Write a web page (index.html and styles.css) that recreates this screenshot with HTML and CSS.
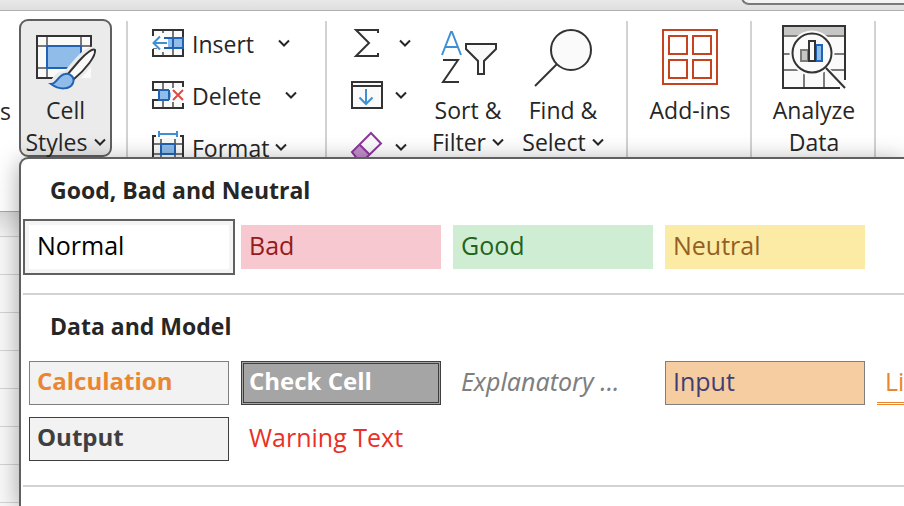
FILE: index.html
```html
<!DOCTYPE html>
<html lang="en">
<head>
<meta charset="utf-8">
<title>Cell Styles</title>
<link rel="stylesheet" href="styles.css">
</head>
<body>
<svg class="defs" width="0" height="0" aria-hidden="true">
  <symbol id="chevron" viewBox="0 0 12 8"><path d="M1 1.500 6 6.500 11 1.500" fill="none" stroke="#262626" stroke-width="2"/></symbol>
</svg>
<header class="titlebar"><input class="search" type="search" aria-label="Search"></header>
<main class="window">
  <div class="ribbon" role="toolbar" aria-label="Home">
    <div class="group group-styles">
      <span class="cut-label">s</span>
      <button class="big active" aria-expanded="true">
        <svg width="64" height="60" viewBox="1 0 64 60" fill="none">
          <path d="M4 2H58V44H4Z" fill="#fafafa"/>
          <path d="M14 2V44M48 2V12M4 12H58M4 34H14" stroke="#7a7a7a" stroke-width="2"/>
          <path d="M58 13V2H4V44H40" stroke="#333" stroke-width="2"/>
          <path d="M14 12H48V34H14Z" fill="#8fbce8" stroke="#2062b4" stroke-width="2"/>
          <path d="M62 16C59 14 52 18 45 26L33 40C22 39 24 48 16 51C24 58 38 56 42 46C54 34 63 23 62 16Z" fill="#ebebeb" stroke="#ebebeb" stroke-width="6"/>
          <path d="M62 16C60 14 53 19 46 27L34 41L41 45C53 35 63 22 62 16Z" fill="#fafafa" stroke="#333" stroke-width="2"/>
          <path d="M18 50C24 50 25 41 32 40C38 39 42 44 40 49C37 56 26 56 18 50Z" fill="#8fbce8" stroke="#2062b4" stroke-width="2"/>
        </svg>
        <span>Cell</span><span class="line">Styles <svg class="chev"><use href="#chevron"/></svg></span>
      </button>
    </div>
    <div class="group group-cells">
      <button class="small wide">
        <svg width="32" height="30" viewBox="0 0 32 30" fill="none">
          <path d="M1 2H31V28H1Z" fill="#fafafa"/>
          <path d="M11 2V28M21 2V28M1 10H31M1 20H31" stroke="#777" stroke-width="2"/>
          <path d="M1 8V2H31V28H1V21" stroke="#333" stroke-width="2"/>
          <path d="M12 10H31V20H12Z" fill="#8fbce8"/><path d="M11 10H31V20H11M21 10V20" stroke="#2062b4" stroke-width="2"/>
          <path d="M0 9H5V5H12V11H16V19H12V24H5V20H0Z" fill="#fff"/>
          <path d="M15 15H1M8 8.500 1.500 15 8 21.500" stroke="#3f8fd2" stroke-width="2"/>
        </svg><span>Insert</span><svg class="chev"><use href="#chevron"/></svg>
      </button>
      <button class="small wide">
        <svg width="32" height="30" viewBox="0 0 32 30" fill="none">
          <path d="M1 2H31V28H1V20H7V10H1Z" fill="#fafafa"/>
          <path d="M11 2V10M21 2V8M11 20V28M21 22V28" stroke="#777" stroke-width="2"/>
          <path d="M31 7V2H1V10H7M7 20H1V28H31V23" stroke="#333" stroke-width="2"/>
          <path d="M7 10H16L19 13V17L16 20H7Z" fill="#8fbce8"/>
          <path d="M17 10H7V20H17M17 10V20" stroke="#2062b4" stroke-width="2"/>
          <path d="M21 8.500 32 20.500M32 8.500 21 20.500" stroke="#fff" stroke-width="5"/>
          <path d="M21 10 31 20M31 10 21 20" stroke="#df4b43" stroke-width="2"/>
        </svg><span>Delete</span><svg class="chev"><use href="#chevron"/></svg>
      </button>
      <button class="small">
        <svg width="32" height="34" viewBox="0 0 32 34" fill="none">
          <path d="M1 6H31V32H1Z" fill="#fafafa"/>
          <path d="M9 9V32M23 9V32M1 14H31M1 24H31" stroke="#777" stroke-width="2"/>
          <path d="M4 6H1V32H31V6H28" stroke="#333" stroke-width="2"/>
          <path d="M9 14H23V24H9Z" fill="#8fbce8" stroke="#2062b4" stroke-width="2"/>
          <path d="M5 0H27V8H5Z" fill="#fff"/>
          <path d="M7 4H25M7 1V7M25 1V7" stroke="#3f8fd2" stroke-width="2"/>
        </svg><span>Format</span><svg class="chev"><use href="#chevron"/></svg>
      </button>
    </div>
    <div class="group group-editing">
      <div class="stack">
        <button class="small sum" aria-label="AutoSum">
          <svg width="32" height="30" viewBox="0 0 32 30" fill="none"><path d="M27 5V2H5L18 15 5 28H27V25" stroke="#333" stroke-width="2"/></svg><svg class="chev"><use href="#chevron"/></svg>
        </button>
        <button class="small" aria-label="Fill">
          <svg width="32" height="30" viewBox="0 0 32 30" fill="none"><path d="M1 2H31V28H1ZM1 6H31" fill="#fafafa" stroke="#333" stroke-width="2"/><path d="M15 9V24M8.500 17.500 15 24 21.500 17.500" stroke="#3f8fd2" stroke-width="2"/></svg><svg class="chev"><use href="#chevron"/></svg>
        </button>
        <button class="small" aria-label="Clear">
          <svg width="32" height="34" viewBox="0 0 32 34" fill="none"><path d="M20 3 30 13.500 12 31H8L1 24V21Z" fill="#fafafa"/><path d="M9 14 19 25 12 31H8L1 23Z" fill="#c490cf"/><path d="M20 3 30 13.500 12 31H8L1 22ZM8 14 19 25" stroke="#8c379b" stroke-width="2"/></svg><svg class="chev"><use href="#chevron"/></svg>
        </button>
      </div>
      <button class="big sort">
        <svg width="64" height="60" viewBox="0 0 64 60" fill="none">
          <path d="M6 21 15 -2H16L25 21M9 13H22" stroke="#3f8fd2" stroke-width="2"/>
          <path d="M7 26H22L7 48H23" stroke="#333" stroke-width="2"/>
          <path d="M30 10H60V15L48 27V40H42V27L30 15Z" fill="#fafafa" stroke="#333" stroke-width="2"/>
        </svg>
        <span>Sort &amp;</span><span class="line">Filter <svg class="chev"><use href="#chevron"/></svg></span>
      </button>
      <button class="big find">
        <svg width="64" height="60" viewBox="0 0 64 60" fill="none"><circle cx="40" cy="16" r="20" fill="#fafafa" stroke="#333" stroke-width="2"/><path d="M26 30 4 52" stroke="#333" stroke-width="2"/></svg>
        <span>Find &amp;</span><span class="line">Select <svg class="chev"><use href="#chevron"/></svg></span>
      </button>
    </div>
    <div class="group group-wide">
      <button class="big">
        <svg width="64" height="60" viewBox="0 0 64 60" fill="none" stroke="#c5441f" stroke-width="2"><path d="M5-4H59V50H5Z" fill="#fff"/><path d="M11 2H29V20H11ZM35 2H53V20H35ZM11 26H29V44H11ZM35 26H53V44H35Z"/></svg>
        <span>Add-ins</span>
      </button>
    </div>
    <div class="group group-wide">
      <button class="big">
        <svg width="64" height="60" viewBox="0 0 64 60" fill="none">
          <path d="M1-8H63V54H1Z" fill="#fafafa"/><path d="M1-8H63V1H1Z" fill="#c6c6c4"/>
          <path d="M1 2H63M1 20H63M1 36H63M22 36V54M42 36V54" stroke="#7d7b78" stroke-width="2"/>
          <path d="M63 46V-8H1V54H58" stroke="#333" stroke-width="2"/>
          <path d="M44 35 61 52" stroke="#fafafa" stroke-width="6"/>
          <circle cx="30" cy="19" r="21" fill="#fafafa" stroke="#fafafa" stroke-width="3"/>
          <circle cx="30" cy="19" r="19.500" stroke="#333" stroke-width="2"/>
          <path d="M44 34 63 54" stroke="#333" stroke-width="2"/>
          <path d="M19 16H26V27H19Z" fill="#c6c6c4" stroke="#7d7b78" stroke-width="2"/>
          <path d="M34 11H40V27H34Z" fill="#8fbce8" stroke="#2062b4" stroke-width="2"/>
          <path d="M27 7H33V27H27Z" fill="#fafafa" stroke="#333" stroke-width="2"/>
        </svg>
        <span>Analyze</span><span>Data</span>
      </button>
    </div>
  </div>
  <div class="sheet"></div>
  <div class="menu" role="menu" aria-label="Cell Styles">
    <section class="section">
      <h2>Good, Bad and Neutral</h2>
      <div class="swatches">
        <button class="swatch normal">Normal</button>
        <button class="swatch bad">Bad</button>
        <button class="swatch good">Good</button>
        <button class="swatch neutral">Neutral</button>
      </div>
    </section>
    <section class="section">
      <h2>Data and Model</h2>
      <div class="swatches">
        <button class="swatch calculation">Calculation</button>
        <button class="swatch check">Check Cell</button>
        <button class="swatch explanatory">Explanatory ...</button>
        <button class="swatch input">Input</button>
        <button class="swatch linked">Linked Cell</button>
        <button class="swatch output">Output</button>
        <button class="swatch warning">Warning Text</button>
      </div>
    </section>
  </div>
</main>
</body>
</html>
```
FILE: styles.css
```css
* { box-sizing: border-box; }
body {
  margin: 0;
  height: 100vh;
  display: flex;
  flex-direction: column;
  overflow: hidden;
  font: 23px/32px "Open Sans", "Noto Sans", sans-serif;
  color: #262626;
  background: #fff;
}
button { font: inherit; color: inherit; background: none; border: 0; padding: 0; margin: 0; }
svg { display: block; flex: none; overflow: visible; }
.defs { position: absolute; }

.titlebar {
  flex: none;
  display: flex;
  align-items: flex-end;
  justify-content: flex-end;
  height: 11px;
  padding-bottom: 5px;
  overflow: hidden;
  background: linear-gradient(#e8e8e8, #dfdfdf);
  border-bottom: 1px solid #b0b0b0;
}
.search {
  width: 18%;
  height: 24px;
  flex: none;
  appearance: none;
  background: #f3f3f3;
  border: 2px solid #7a7a7a;
  border-right: 0;
  border-radius: 8px 0 0 8px;
}

.window { position: relative; flex: 1; min-height: 0; display: flex; flex-direction: column; }
.ribbon {
  flex: none;
  display: flex;
  height: 201px;
  padding-top: 10px;
  background: #fff;
  border-bottom: 1px solid #a8a8a8;
}
.group { display: flex; flex: none; border-right: 2px solid #d2d2d2; }
.cut-label { width: 19px; padding-top: 74px; }
.group-styles { width: 128px; }
.group-cells { width: 199px; flex-direction: column; padding-left: 24px; }
.group-editing { width: 301px; padding-left: 24px; }
.group-wide { width: 124px; justify-content: center; padding-left: 2px; }

.big {
  display: flex;
  flex-direction: column;
  align-items: center;
  height: 138px;
  padding-top: 13px;
  border: 0 solid #606060;
  white-space: nowrap;
}
.active { width: 93px; margin-top: -2px; border-width: 2px; border-radius: 9px; background: #ebebeb; }
.line { display: flex; align-items: center; gap: 6px; }
.chev { width: 12px; height: 8px; }
.stack { width: 80px; }
.sort { width: 74px; }
.find { width: 84px; margin-left: 16px; }

.small { display: flex; align-items: center; gap: 8px; height: 52px; padding-bottom: 8px; }
.small span { padding-top: 2px; }
.small .chev { margin-left: -2px; }
.wide .chev { margin-left: 16px; }
.stack .small { gap: 14px; }
.stack .sum { gap: 18px; }

.sheet {
  flex: 1;
  background:
    linear-gradient(rgba(0, 0, 0, .12), transparent 28px),
    repeating-linear-gradient(#f9f9f9 0 24px, #d4d4d4 24px 25px, #f9f9f9 25px 38px);
}

.menu {
  position: absolute;
  top: 146px;
  left: 19px;
  right: 0;
  bottom: 0;
  overflow: hidden;
  background: #fff;
  border: solid #606060;
  border-width: 2px 0 0 2px;
  border-radius: 9px 0 0;
  box-shadow: 0 4px 24px rgba(0, 0, 0, .35);
}
.section { margin-left: 2px; padding: 15px 0 24px 6px; border-bottom: 2px solid #d2d2d2; }
.section h2 { margin: 0 0 19px 21px; font-size: 23px; line-height: 32px; font-weight: 700; }
.swatches { display: grid; grid-template-columns: repeat(5, 200px); gap: 12px; }
.swatch {
  height: 44px;
  padding: 0 8px 4px;
  text-align: left;
  white-space: nowrap;
  font-size: 25px;
  border: 0 solid #7f7f7f;
}
.normal { color: #000; background: #fff; box-shadow: 0 0 0 4px #f4f4f4, 0 0 0 6px #606060; }
.bad { color: #951b1b; background: #f7c8cf; }
.good { color: #1f641d; background: #cfedd2; }
.neutral { color: #955f22; background: #fceba5; }
.calculation, .output { font-size: 24px; font-weight: 700; background: #f2f2f2; border-width: 1px; padding-left: 7px; }
.calculation { color: #ea8631; }
.output { color: #3f3f3f; border-color: #3f3f3f; }
.check { color: #fff; font-size: 24px; font-weight: 700; background: #a5a5a5; border: 3px double #3f3f3f; padding-left: 5px; }
.explanatory { font-family: "Noto Sans", "Open Sans", sans-serif; color: #7f7f7f; font-style: italic; }
.input { color: #3f3f76; background: #f6cda0; border-width: 1px; padding-left: 7px; }
.linked { color: #ea8631; border-bottom: 3px double #ea8631; padding-bottom: 1px; }
.warning { color: #ea3026; }
```
